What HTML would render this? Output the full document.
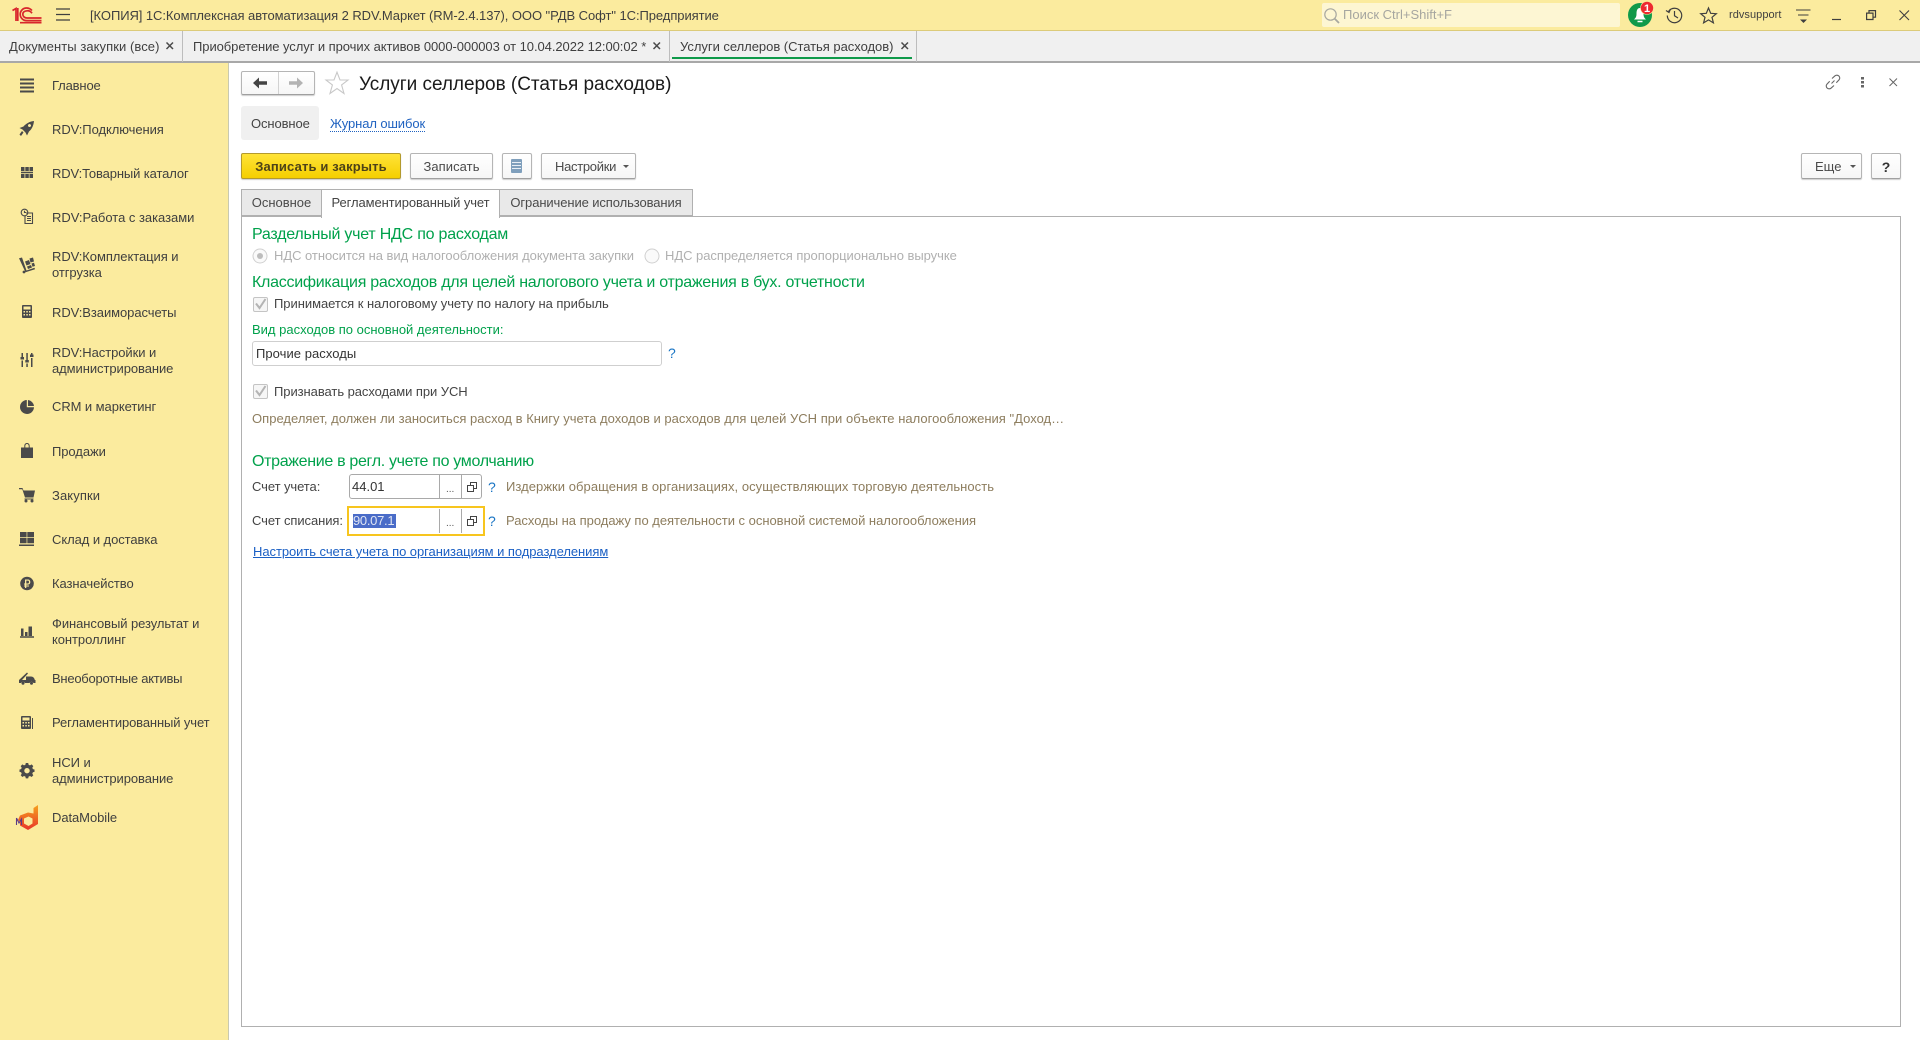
<!DOCTYPE html>
<html lang="ru"><head><meta charset="utf-8"><title>Услуги селлеров</title>
<style>
*{box-sizing:border-box}
html,body{margin:0;padding:0;width:1920px;height:1040px;overflow:hidden;background:#fff}
body{font-family:"Liberation Sans",Arial,sans-serif;font-size:13px;color:#333;position:relative}
.a{position:absolute}
.t{position:absolute;white-space:nowrap;line-height:16px;height:16px}
.h{position:absolute;white-space:nowrap;line-height:20px;height:20px;font-size:16px;color:#00a14b;letter-spacing:-.27px}
.s{position:absolute;white-space:nowrap;line-height:16px;height:16px;left:52px;color:#3f3f3f;letter-spacing:-.07px}
.btn{position:absolute;top:153px;height:26px;border:1px solid #b5b5b5;border-bottom-color:#a0a0a0;border-radius:2px;background:linear-gradient(#fff,#f6f6f6);box-shadow:0 1px 1px #ccc;text-align:center;line-height:26px;color:#4a4a4a}
.tab{position:absolute;top:189px;height:28px;border:1px solid #b0b0b0;background:#e9e9e9;text-align:center;line-height:26px;color:#4a4a4a}
.g{color:#8d7d5e}
.d{color:#b0b0b0}
.q{color:#1a75c4;font-size:14px}
svg{position:absolute;overflow:visible}
</style></head><body>

<!-- top bar -->
<div class="a" style="left:0;top:0;width:1920px;height:31px;background:#fbeb9e;border-bottom:1px solid #dccb7a"></div>
<svg style="left:12px;top:7px" width="30" height="17" viewBox="0 0 30 17" fill="none" stroke="#d8262c" stroke-width="1.7">
<path d="M0.5 3.5L4 1.5V14M5.8 1V14"/>
<path d="M20 3.5C18.5 1.8 16.5 1 14.5 1C11 1 8.2 3.8 8.2 7.3C8.2 10.8 11 13.6 14.5 13.6H29.500"/>
<path d="M20 6.2C19 4.8 17 3.6 15 3.8C12.6 4 10.8 5.2 10.8 7.3C10.8 9.4 12.6 11 15 11H29.500"/>
<path d="M8 15.7H29.500"/>
</svg>
<svg style="left:56px;top:8px" width="14" height="13" fill="none" stroke="#3f3f3f" stroke-width="1.3"><path d="M0 1H14M0 6.500H14M0 12H14"/></svg>
<div class="t" style="left:90px;top:8px;color:#3f3f3f;letter-spacing:-.07px">[КОПИЯ] 1С:Комплексная автоматизация 2 RDV.Маркет (RM-2.4.137), ООО "РДВ Софт" 1С:Предприятие</div>

<div class="a" style="left:1322px;top:3px;width:298px;height:24px;background:#fdf6d3;border-radius:2px"></div>
<svg style="left:1324px;top:8px" width="15" height="15" fill="none" stroke="#a8a8a0" stroke-width="1.2"><circle cx="6.500" cy="6.500" r="5.700"/><path d="M10.500 10.500L15 15" stroke-width="1.800"/></svg>
<div class="t" style="left:1343px;top:7px;color:#a6a6a0">Поиск Ctrl+Shift+F</div>

<svg style="left:1628px;top:3px" width="30" height="26">
<circle cx="12" cy="12" r="12" fill="#0f9a4a"/>
<path d="M12 5C9 5 8.500 8 8.500 11C8.500 14 7.500 15 6 16.500H18C16.500 15 15.500 14 15.500 11C15.500 8 15 5 12 5Z" fill="#fff"/>
<path d="M9.500 18.500H14.500" stroke="#fff" stroke-width="1.500"/>
<circle cx="19" cy="5" r="6.500" fill="#ee2a30" stroke="#fbeb9e" stroke-width=".6"/>
<text x="19" y="9" text-anchor="middle" font-family="Liberation Sans" font-size="11" font-weight="700" fill="#fff">1</text>
</svg>
<svg style="left:1666px;top:7px" width="17" height="17" fill="none" stroke="#3f3f3f" stroke-width="1.200"><path d="M2.500 4.500A7.200 7.200 0 1 1 1.300 8.500"/><path d="M0 3.500L3 5.500L4.500 2" /><path d="M8.500 4V8.800L12 11"/></svg>
<svg style="left:1700px;top:7px" width="17" height="17" fill="none" stroke="#3f3f3f" stroke-width="1.200"><path d="M8.500 1L10.700 6.300L16.300 6.700L12 10.300L13.400 15.900L8.500 12.900L3.600 15.900L5 10.300L.7 6.700L6.300 6.300Z"/></svg>
<div class="t" style="left:1729px;top:7px;color:#3f3f3f;font-size:11px;letter-spacing:.05px">rdvsupport</div>
<svg style="left:1796px;top:9px" width="15" height="15" fill="none" stroke="#3f3f3f" stroke-width="1.100"><path d="M0 1H14.500M2 6H12.500"/><path d="M4 10.500H11L7.500 14Z" fill="#3f3f3f" stroke="none"/></svg>
<svg style="left:1832px;top:10px" width="11" height="11" fill="none" stroke="#3f3f3f" stroke-width="1.200"><path d="M0 9.500H9"/></svg>
<svg style="left:1866px;top:10px" width="11" height="11" fill="none" stroke="#3f3f3f" stroke-width="1.200"><path d="M.6 3.100H7V9.500H.6Z"/><path d="M3 3V.6H9.500V7.200H7"/></svg>
<svg style="left:1899px;top:10px" width="11" height="11" fill="none" stroke="#3f3f3f" stroke-width="1.100"><path d="M.500.500L10 10M10 .500L.500 10"/></svg>

<!-- open tabs bar -->
<div class="a" style="left:0;top:31px;width:1920px;height:32px;background:#f0f0f0;border-bottom:2px solid #a8a8a8"></div>
<div class="a" style="left:182px;top:31px;width:1px;height:31px;background:#bdbdbd"></div>
<div class="a" style="left:669px;top:31px;width:1px;height:31px;background:#bdbdbd"></div>
<div class="a" style="left:916px;top:31px;width:1px;height:31px;background:#bdbdbd"></div>
<div class="t" style="left:9px;top:39px;color:#3f3f3f;letter-spacing:.07px">Документы закупки (все)</div>
<div class="t" style="left:193px;top:39px;color:#3f3f3f;letter-spacing:-.065px">Приобретение услуг и прочих активов 0000-000003 от 10.04.2022 12:00:02 *</div>
<div class="t" style="left:680px;top:39px;color:#3f3f3f;letter-spacing:-.03px">Услуги селлеров (Статья расходов)</div>
<svg style="left:166px;top:42px" width="8" height="8" fill="none" stroke="#4a4a4a" stroke-width="1.500"><path d="M.500.500L7 7M7 .500L.500 7"/></svg>
<svg style="left:653px;top:42px" width="8" height="8" fill="none" stroke="#4a4a4a" stroke-width="1.500"><path d="M.500.500L7 7M7 .500L.500 7"/></svg>
<svg style="left:901px;top:42px" width="8" height="8" fill="none" stroke="#4a4a4a" stroke-width="1.500"><path d="M.500.500L7 7M7 .500L.500 7"/></svg>
<div class="a" style="left:672px;top:57px;width:240px;height:2px;background:#0f9a4a"></div>

<!-- sidebar -->
<div class="a" style="left:0;top:63px;width:229px;height:977px;background:#fbeb9e;border-right:1px solid #c9c9b0"></div>

<svg style="left:0;top:0" width="229" height="1040" fill="#4a4a4a">
<!-- main -->
<path d="M20 78.500H34V80.500H20ZM20 82.500H34V84.500H20ZM20 86.500H34V88.500H20ZM20 90.500H34V92.500H20Z"/>
<!-- rocket -->
<path fill-rule="evenodd" d="M34 121C29.500 121.500 26 123.500 23.500 126.500L19.500 128L22.500 129.500L25.500 132.500L27 135.500L29 131.500C32 129 33.500 125.500 34 121ZM29.500 124A1.500 1.500 0 1 1 29.499 124Z"/>
<path d="M22 131L23.500 132.500L21 136L19.500 134.500Z"/>
<!-- catalog -->
<path d="M21 167H24.500V171H21ZM25.300 167H28.800V171H25.300ZM29.500 167H33V171H29.500ZM21 171.800H33V173.200H21ZM21 174H24.500V178H21ZM25.300 174H28.800V178H25.300ZM29.500 174H33V178H29.500Z"/>
<!-- orders -->
<g fill="none" stroke="#4a4a4a" stroke-width="1.100"><path d="M26 213H32.500V223.500H25V216"/><circle cx="24.500" cy="212.500" r="3.300"/><path d="M24.500 210.800V212.500H26M27 216.500H31M27 218.500H31M27 220.500H31"/></g>
<!-- cart / picking -->
<path d="M19 258.300L22 257.500L26.500 270.500L34.500 267.800L35 269.200L25.500 272.300Z"/><circle cx="24" cy="272" r="1.400"/>
<path d="M25 261.500L29 260L30.500 264L26.500 265.500ZM29.500 258.500L33 257.500L34 261.500L30.500 262.500ZM27 266.500L31 265L32 267.500L28 269ZM31.500 263.500L34 262.800L35 266L32.500 266.800Z"/>
<!-- calculator -->
<path fill-rule="evenodd" d="M23 305H31C31.600 305 32 305.400 32 306V317C32 317.600 31.600 318 31 318H23C22.400 318 22 317.600 22 317V306C22 305.400 22.400 305 23 305ZM23.500 306.500V309.500H30.500V306.500ZM23.500 311V312.500H25V311ZM26.300 311V312.500H27.800V311ZM29 311V312.500H30.500V311ZM23.500 314V315.500H25V314ZM26.300 314V315.500H27.800V314ZM29 314V315.500H30.500V314Z"/>
<!-- sliders -->
<path d="M21.500 353H23V357H24V359.500H20.500V357H21.500ZM21.500 360.500H23V367H21.500ZM26.300 353H27.800V360H28.800V362.500H25.300V360H26.300ZM26.300 363.500H27.800V367H26.300ZM31 353H32.500V354.500H33.500V357H30V354.500H31ZM31 358H32.500V367H31Z"/>
<!-- pie -->
<path d="M26.800 400A7 7 0 1 0 34 407.300H26.800Z"/><path d="M28 400A7 7 0 0 1 34 406H28Z"/>
<!-- bag -->
<path fill-rule="evenodd" d="M21 447.500H24.300V446C24.300 444.300 25.300 443 27 443C28.700 443 29.700 444.300 29.700 446V447.500H33V458H21ZM25.300 447.500H28.700V446C28.700 444.900 28.100 444 27 444C25.900 444 25.300 444.900 25.300 446Z"/>
<!-- cart -->
<path d="M19 488H22.500L23.500 490.500H35L33.500 497.500H25L22.300 489.200H19Z"/><path d="M24.500 498.500H33.500V499.500H24.500Z"/><circle cx="26" cy="501" r="1.500"/><circle cx="32" cy="501" r="1.500"/>
<!-- warehouse -->
<path d="M20 532H26.600V537.300H20ZM27.300 532H34V537.300H27.300ZM20 538H26.600V543.300H20ZM27.300 538H34V543.300H27.300ZM19 544.500H34V546H19Z"/>
<!-- ruble -->
<path fill-rule="evenodd" d="M27 576.700A6.800 6.800 0 1 1 26.999 576.700ZM25 579.500V583.500H24V584.600H25V585.500H24V586.500H25V588H26.300V586.500H29V585.500H26.300V584.600H28C29.500 584.600 30.300 583.500 30.300 582C30.300 580.500 29.300 579.500 28 579.500ZM26.300 580.600H27.900C28.700 580.600 29 581.200 29 582C29 582.800 28.600 583.500 27.800 583.500H26.300Z"/>
<!-- chart -->
<path d="M21 628.500H23.500V636H21ZM25 632H27.500V636H25ZM28.500 626.500H32V636H28.500ZM20 636.200H34V637.700H20Z"/>
<!-- truck -->
<path d="M19 680L27 672.500L28 673.500L22 680H26V676.500H31C33 676.500 34.500 678 34.800 680H35.500V683H33.500A2.200 2.200 0 0 0 29.500 683H25A2.200 2.200 0 0 0 21 683H19Z"/><circle cx="23" cy="683.300" r="1.500"/><circle cx="31.500" cy="683.300" r="1.500"/>
<!-- regl -->
<path fill-rule="evenodd" d="M22 716H30C30.600 716 31 716.400 31 717V728C31 728.600 30.600 729 30 729H22C21.400 729 21 728.600 21 728V717C21 716.400 21.400 716 22 716ZM22.500 717.500V720.500H29.500V717.500ZM22.500 722V723.500H24V722ZM25.300 722V723.500H26.800V722ZM28 722V723.500H29.500V722ZM22.500 725V726.500H24V725ZM25.300 725V726.500H26.800V725ZM28 725V726.500H29.500V725Z"/>
<path d="M32 718H33V729H32Z"/>
<!-- gear -->
<path fill-rule="evenodd" d="M25.800 763H28.200L28.600 764.800L30 765.400L31.600 764.400L33.300 766.100L32.300 767.700L32.900 769.100L34.500 769.500V771.900L32.900 772.300L32.300 773.700L33.300 775.300L31.600 777L30 776L28.600 776.600L28.200 778.400H25.800L25.400 776.600L24 776L22.400 777L20.700 775.300L21.700 773.700L21.100 772.300L19.500 771.900V769.500L21.100 769.100L21.700 767.700L20.700 766.100L22.400 764.400L24 765.400L25.400 764.800ZM27 768A2.700 2.700 0 1 0 27.001 768Z"/>
<!-- datamobile -->
<defs><linearGradient id="dm" x1="0" y1="0" x2="0" y2="1"><stop offset="0" stop-color="#f6a21e"/><stop offset="1" stop-color="#e8352a"/></linearGradient></defs>
<path fill-rule="evenodd" fill="url(#dm)" d="M20 815.500L28 812.500L33.500 813.500V808L38 805V824L28 830L20 825.500V822L18 820ZM24 818.500V823.500L28.500 826L32.500 823.500V818.500L28.500 816.500Z"/>
<path d="M16.500 818V825M16.500 818L19 823L21.500 819V825" fill="none" stroke="#5b3b86" stroke-width="1.100"/>
</svg>

<div class="s" style="top:78px;letter-spacing:-.15px">Главное</div>
<div class="s" style="top:122px">RDV:Подключения</div>
<div class="s" style="top:166px;letter-spacing:-.12px">RDV:Товарный каталог</div>
<div class="s" style="top:210px;letter-spacing:-.02px">RDV:Работа с заказами</div>
<div class="s" style="top:249px;letter-spacing:-.07px">RDV:Комплектация и</div>
<div class="s" style="top:265px">отгрузка</div>
<div class="s" style="top:305px">RDV:Взаиморасчеты</div>
<div class="s" style="top:345px">RDV:Настройки и</div>
<div class="s" style="top:361px">администрирование</div>
<div class="s" style="top:399px">CRM и маркетинг</div>
<div class="s" style="top:444px">Продажи</div>
<div class="s" style="top:488px;letter-spacing:.1px">Закупки</div>
<div class="s" style="top:532px">Склад и доставка</div>
<div class="s" style="top:576px">Казначейство</div>
<div class="s" style="top:616px">Финансовый результат и</div>
<div class="s" style="top:632px">контроллинг</div>
<div class="s" style="top:671px;letter-spacing:-.25px">Внеоборотные активы</div>
<div class="s" style="top:715px;letter-spacing:-.12px">Регламентированный учет</div>
<div class="s" style="top:755px">НСИ и</div>
<div class="s" style="top:771px">администрирование</div>
<div class="s" style="top:810px">DataMobile</div>

<!-- form header -->
<div class="a" style="left:241px;top:71px;width:74px;height:24px;border:1px solid #b5b5b5;border-bottom-color:#9f9f9f;border-radius:2px;background:linear-gradient(#fff,#f6f6f6);box-shadow:0 1px 1px #ccc"></div>
<div class="a" style="left:278px;top:72px;width:1px;height:22px;background:#d2d2d2"></div>
<svg style="left:253px;top:77px" width="14" height="12"><path d="M0 6L6 0.500V4.200H14V7.800H6V11.500Z" fill="#444"/></svg>
<svg style="left:289px;top:77px" width="14" height="12"><path d="M14 6L8 0.500V4.200H0V7.800H8V11.500Z" fill="#b3b3b3"/></svg>
<svg style="left:325px;top:71px" width="24" height="24" fill="#fff" stroke="#c8c8c8" stroke-width="1.100"><path d="M12 1.200L15 9H23L16.600 14L19 22.500L12 17.500L5 22.500L7.400 14L1 9H9Z"/></svg>
<div class="a" style="left:359px;top:74px;font-size:19px;line-height:22px;color:#1a1a1a;white-space:nowrap;letter-spacing:-.03px">Услуги селлеров (Статья расходов)</div>

<svg style="left:1825px;top:74px" width="16" height="16" fill="none" stroke="#666" stroke-width="1.100"><path d="M6.500 9.500L9.500 6.500"/><path d="M7 4.500L10 1.800C11 .9 12.800.9 13.900 2C15 3.100 15 4.800 14.100 5.800L11.300 8.800"/><path d="M9 11.500L6 14.200C5 15.100 3.200 15.100 2.100 14C1 12.900 1 11.200 1.900 10.200L4.700 7.200"/></svg>
<svg style="left:1861px;top:77px" width="4" height="11" fill="#666"><rect x="0" y="0" width="3" height="2.500"/><rect x="0" y="4" width="3" height="2.500"/><rect x="0" y="8" width="3" height="2.500"/></svg>
<svg style="left:1889px;top:78px" width="9" height="9" fill="none" stroke="#666" stroke-width="1"><path d="M.500.500L8 8M8 .500L.500 8"/></svg>

<div class="a" style="left:241px;top:106px;width:78px;height:34px;background:#f0f0f0;border-radius:3px"></div>
<div class="t" style="left:251px;top:116px;color:#444;letter-spacing:-.1px">Основное</div>
<div class="t" style="left:330px;top:116px;color:#1f62c0;border-bottom:1px dotted #1f62c0;letter-spacing:-.1px">Журнал ошибок</div>

<!-- toolbar -->
<div class="btn" style="left:241px;width:160px;border-color:#b39a2e;background:linear-gradient(#ffe338,#f5cf00);font-weight:700;color:#4d4218;letter-spacing:.15px">Записать и закрыть</div>
<div class="btn" style="left:410px;width:83px;letter-spacing:.07px">Записать</div>
<div class="btn" style="left:502px;width:30px"></div>
<svg style="left:511px;top:158px" width="12" height="16"><rect width="11" height="14" y="1" rx="1" fill="#7f9fbc"/><path d="M1 4.500H10M1 7.500H10M1 10.500H10" stroke="#e8eef5"/></svg>
<div class="btn" style="left:541px;width:95px;text-align:left;padding-left:13px;letter-spacing:-.3px">Настройки</div>
<svg style="left:623px;top:165px" width="7" height="4"><path d="M0 0H6L3 3Z" fill="#555"/></svg>
<div class="btn" style="left:1801px;width:61px;text-align:left;padding-left:13px">Еще</div>
<svg style="left:1850px;top:165px" width="7" height="4"><path d="M0 0H6L3 3Z" fill="#555"/></svg>
<div class="btn" style="left:1871px;width:30px;font-weight:700;color:#333;font-size:14px">?</div>

<!-- tabs & panel -->
<div class="a" style="left:241px;top:216px;width:1660px;height:811px;border:1px solid #b0b0b0"></div>
<div class="tab" style="left:241px;width:81px;height:27px">Основное</div>
<div class="tab" style="left:499px;width:194px;height:27px;letter-spacing:-.1px">Ограничение использования</div>
<div class="tab" style="left:321px;width:179px;background:#fff;border-bottom:0;height:29px;z-index:1;color:#444;letter-spacing:-.1px">Регламентированный учет</div>

<!-- section 1 -->
<div class="h" style="left:252px;top:225px;letter-spacing:-.23px">Раздельный учет НДС по расходам</div>
<svg style="left:252px;top:248px" width="16" height="16"><circle cx="8" cy="8" r="7" fill="#fafafa" stroke="#d0d0d0"/><circle cx="8" cy="8" r="3" fill="#bdbdbd"/></svg>
<div class="t d" style="left:274px;top:248px;letter-spacing:-.04px">НДС относится на вид налогообложения документа закупки</div>
<svg style="left:644px;top:248px" width="16" height="16"><circle cx="8" cy="8" r="7" fill="#fafafa" stroke="#d0d0d0"/></svg>
<div class="t d" style="left:665px;top:248px;letter-spacing:-.04px">НДС распределяется пропорционально выручке</div>

<div class="h" style="left:252px;top:273px">Классификация расходов для целей налогового учета и отражения в бух. отчетности</div>
<div class="a" style="left:253px;top:297px;width:15px;height:15px;border:1px solid #c4c4c4;border-radius:2px;background:#f6f6f6"></div>
<svg style="left:255px;top:298px" width="12" height="12" fill="none" stroke="#b4b4b4" stroke-width="2"><path d="M1 5.500L4.500 10L10.500 1"/></svg>
<div class="t" style="left:274px;top:296px;color:#444;letter-spacing:-.04px">Принимается к налоговому учету по налогу на прибыль</div>

<div class="t" style="left:252px;top:322px;color:#00a14b">Вид расходов по основной деятельности:</div>
<div class="a" style="left:252px;top:341px;width:410px;height:25px;border:1px solid #cfcfcf;border-radius:3px"></div>
<div class="t" style="left:256px;top:346px;color:#333;letter-spacing:.05px">Прочие расходы</div>
<div class="t q" style="left:668px;top:345px">?</div>

<div class="a" style="left:253px;top:384px;width:15px;height:15px;border:1px solid #c4c4c4;border-radius:2px;background:#f6f6f6"></div>
<svg style="left:255px;top:385px" width="12" height="12" fill="none" stroke="#b4b4b4" stroke-width="2"><path d="M1 5.500L4.500 10L10.500 1"/></svg>
<div class="t" style="left:274px;top:384px;color:#444;letter-spacing:-.06px">Признавать расходами при УСН</div>

<div class="t g" style="left:252px;top:411px;letter-spacing:.02px">Определяет, должен ли заноситься расход в Книгу учета доходов и расходов для целей УСН при объекте налогообложения "Доход…</div>

<div class="h" style="left:252px;top:452px;letter-spacing:-.32px">Отражение в регл. учете по умолчанию</div>

<div class="t" style="left:252px;top:479px;color:#444;letter-spacing:-.08px">Счет учета:</div>
<div class="a" style="left:349px;top:474px;width:133px;height:25px;border:1px solid #a9a9a9;border-radius:3px"></div>
<div class="a" style="left:439px;top:475px;width:1px;height:23px;background:#a9a9a9"></div>
<div class="a" style="left:461px;top:475px;width:1px;height:23px;background:#a9a9a9"></div>
<div class="t" style="left:352px;top:479px;color:#333">44.01</div>
<div class="t" style="left:446px;top:482px;color:#555;font-size:10px">...</div>
<svg style="left:467px;top:482px" width="10" height="10" fill="none" stroke="#444"><path d="M.500 3.500H6.500V9.500H.500Z"/><path d="M3.500 3.500V.500H9.500V6.500H6.500"/></svg>
<div class="t q" style="left:488px;top:479px">?</div>
<div class="t g" style="left:506px;top:479px;letter-spacing:.05px">Издержки обращения в организациях, осуществляющих торговую деятельность</div>

<div class="t" style="left:252px;top:513px;color:#444;letter-spacing:-.08px">Счет списания:</div>
<div class="a" style="left:347px;top:506px;width:138px;height:30px;border:2px solid #f7c51e"></div>
<div class="a" style="left:439px;top:509px;width:1px;height:24px;background:#a9a9a9"></div>
<div class="a" style="left:461px;top:509px;width:1px;height:24px;background:#a9a9a9"></div>
<div class="a" style="left:353px;top:514px;width:43px;height:14px;background:#4a6cc8"></div>
<div class="t" style="left:353px;top:513px;color:#dfe4f2;letter-spacing:-.3px">90.07.1</div>
<div class="t" style="left:446px;top:516px;color:#555;font-size:10px">...</div>
<svg style="left:467px;top:516px" width="10" height="10" fill="none" stroke="#444"><path d="M.500 3.500H6.500V9.500H.500Z"/><path d="M3.500 3.500V.500H9.500V6.500H6.500"/></svg>
<div class="t q" style="left:488px;top:513px">?</div>
<div class="t g" style="left:506px;top:513px;letter-spacing:-.02px">Расходы на продажу по деятельности с основной системой налогообложения</div>

<div class="t" style="left:253px;top:544px;color:#1a5fc4;text-decoration:underline;letter-spacing:-.06px">Настроить счета учета по организациям и подразделениям</div>

</body></html>
